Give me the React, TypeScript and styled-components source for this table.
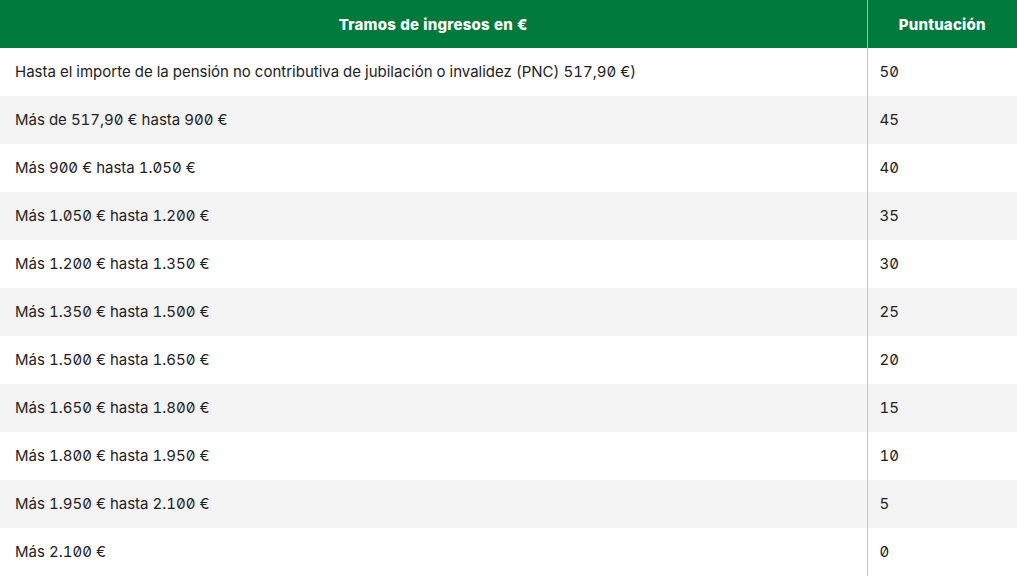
import styled, { createGlobalStyle } from "styled-components";

const rows: [string, string][] = [
  ["Hasta el importe de la pensión no contributiva de jubilación o invalidez (PNC) 517,90 €)", "50"],
  ["Más de 517,90 € hasta 900 €", "45"],
  ["Más 900 € hasta 1.050 €", "40"],
  ["Más 1.050 € hasta 1.200 €", "35"],
  ["Más 1.200 € hasta 1.350 €", "30"],
  ["Más 1.350 € hasta 1.500 €", "25"],
  ["Más 1.500 € hasta 1.650 €", "20"],
  ["Más 1.650 € hasta 1.800 €", "15"],
  ["Más 1.800 € hasta 1.950 €", "10"],
  ["Más 1.950 € hasta 2.100 €", "5"],
  ["Más 2.100 €", "0"],
];

const GlobalStyle = createGlobalStyle`
  body {
    margin: 0;
    background: #ffffff;
    font-family: Inter, "Noto Sans", sans-serif;
    font-feature-settings: "zero" 1, "tnum" 1;
  }
`;

const App = () => {
  return (
    <>
      <GlobalStyle />
      <Table>
        <colgroup>
          <col style={{ width: 867 }} />
          <col />
        </colgroup>
        <thead>
          <tr>
            <HeadCell>Tramos de ingresos en €</HeadCell>
            <HeadCell>Puntuación</HeadCell>
          </tr>
        </thead>
        <tbody>
          {rows.map(([label, score], i) => (
            <Row key={label} $striped={i % 2 === 1}>
              <Cell>{label}</Cell>
              <Cell>{score}</Cell>
            </Row>
          ))}
        </tbody>
      </Table>
    </>
  );
};

export default App;

const Table = styled.table`
  width: 1017px;
  border-collapse: collapse;
  table-layout: fixed;
`;

const HeadCell = styled.th`
  height: 48px;
  padding: 0 12px;
  background-color: #00793c;
  color: #ffffff;
  font-size: 15px;
  font-weight: 800;
  text-align: center;
  letter-spacing: 0.2px;

  & + & {
    border-left: 1px solid #9fbfae;
  }
`;

const Row = styled.tr<{ $striped: boolean }>`
  background-color: ${({ $striped }) => ($striped ? "#f3f3f3" : "#ffffff")};
`;

const Cell = styled.td`
  height: 48px;
  padding: 0 14px 0 15px;
  font-size: 15px;
  line-height: 20px;
  color: #222222;
  vertical-align: middle;

  & + & {
    border-left: 1px solid #c4c4c4;
    padding-left: 12px;
  }
`;
